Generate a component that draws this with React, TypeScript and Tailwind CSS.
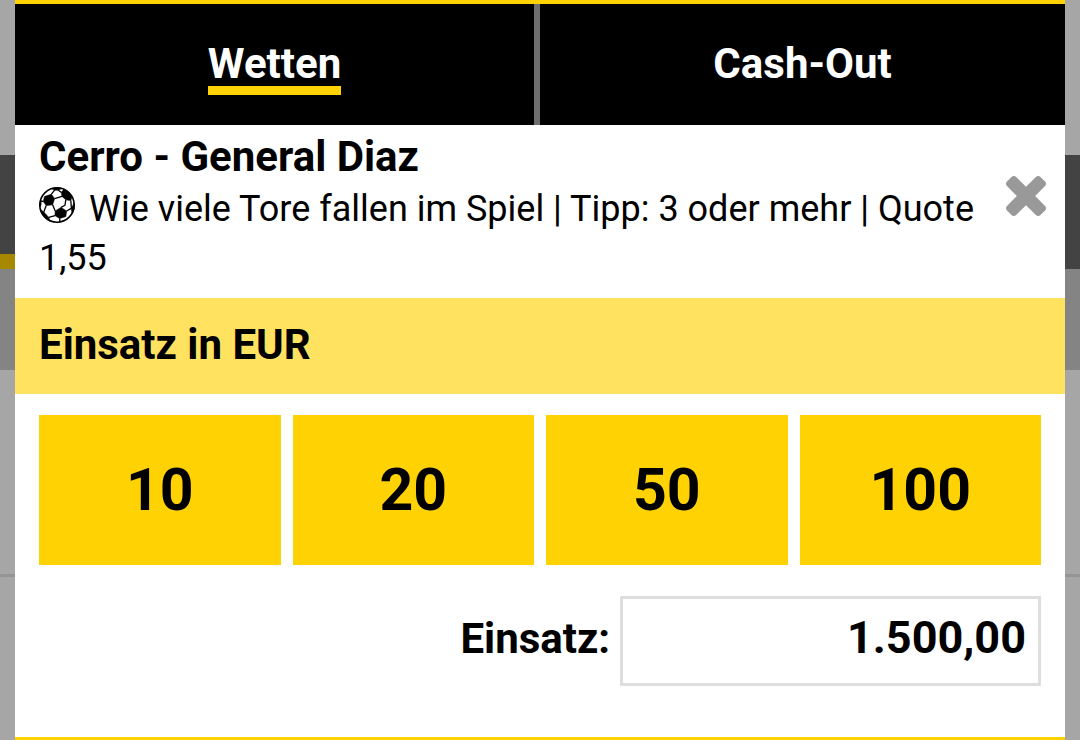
import { useState } from 'react';

const STAKES = [10, 20, 50, 100];

function SoccerBall({ className }: { className?: string }) {
  return (
    <svg viewBox="0 0 36 36" className={className} aria-hidden="true">
      <circle cx="18" cy="18" r="17.2" fill="#fff" stroke="#000" strokeWidth="1.6" />
      <g fill="#000" stroke="#000" strokeWidth="0.6" strokeLinejoin="round">
        <path d="M5.4 9.6 12.4 7.2 15.6 11.6 13.6 17.8 7.2 18.6 4.4 14.6z" />
        <path d="M22.4 5.4 24.6 2.4 29 4.4 33 9.4 31.8 13.6 26.8 12.8 23 9.4z" />
        <path d="M16.2 24 22 20.4 27.6 24 26.8 29.6 20.6 31.6 16 28.6z" />
        <path d="M1.4 22.6 4.8 25 9.8 30.4 11 34.2A18 18 0 0 1 1.4 22.6z" />
        <path d="M12.4 1.6q5.6-1.6 10.4 0l-3.6 1.6h-3.6z" />
        <path d="M35.2 16v6l-2 4.6-1-5.2z" />
        <path d="M.8 15.4 2.2 13.6 2 18.2.8 20z" />
      </g>
      <path
        d="M12.4 7.2 15.6 3.2M19.2 3.2l3.2 2.2M15.6 11.6l7.4-2.2M13.6 17.8l2.6 6.2M26.8 12.8l-.8 5.4-4 2.2M7.2 18.6 4.8 25M4.4 14.6 2.2 14M16 28.6l-6.2 1.8M27.6 24l4.6-2.6M20.6 31.6l.4 3M31.8 13.6l.6 7.8"
        fill="none"
        stroke="#000"
        strokeWidth="1.3"
      />
    </svg>
  );
}

function CloseIcon({ className }: { className?: string }) {
  return (
    <svg viewBox="110 366 1188 1188" className={className} fill="currentColor" aria-hidden="true">
      <path d="M1298 1322q0 40-28 68l-136 136q-28 28-68 28t-68-28l-294-294-294 294q-28 28-68 28t-68-28l-136-136q-28-28-28-68t28-68l294-294-294-294q-28-28-28-68t28-68l136-136q28-28 68-28t68 28l294 294 294-294q28-28 68-28t68 28l136 136q28 28 28 68t-28 68l-294 294 294 294q28 28 28 68z" />
    </svg>
  );
}

// Dimmed page behind the bet slip
function PageBehind() {
  return (
    <div className="absolute inset-0 flex flex-col bg-[#a6a6a6]" aria-hidden="true">
      <div className="h-[155px]" />
      <div className="flex h-[114px] items-end bg-[#434343]">
        <div className="h-[15px] w-1/2 bg-[#a68900]" />
      </div>
      <div className="h-[101px] bg-[#848484]" />
      <div className="h-[207px] border-b-3 border-[#959595]" />
    </div>
  );
}

export default function App() {
  const [tab, setTab] = useState('Wetten');
  const [stake, setStake] = useState('1.500,00');

  return (
    <div className="relative min-h-screen px-[15px] font-['Roboto',sans-serif] text-black">
      <PageBehind />

      <main className="relative flex min-h-screen flex-col border-t-4 border-b-3 border-[#ffd204] bg-white">
        {/* Tabs */}
        <nav className="flex h-[121px] bg-black text-[42px] font-bold text-white">
          {['Wetten', 'Cash-Out'].map((name) => (
            <button
              key={name}
              onClick={() => setTab(name)}
              className="flex w-1/2 items-center justify-center border-[#6e6e6e] pb-0.5 first:border-r-6"
            >
              <span
                className={
                  tab === name
                    ? 'border-y-9 border-t-transparent border-b-[#ffd204] leading-[44px]'
                    : 'leading-[44px]'
                }
              >
                {name}
              </span>
            </button>
          ))}
        </nav>

        {/* Selected bet */}
        <section className="flex items-start justify-between pt-1 pr-[19px] pb-[15px] pl-6">
          <div>
            <h2 className="pb-px text-[42px] leading-[55px] font-bold">Cerro - General Diaz</h2>
            <p className="text-[36px] leading-[49px]">
              <SoccerBall className="mr-[14px] inline-block size-9 align-[-2px]" />
              Wie viele Tore fallen im Spiel | Tipp: 3 oder mehr | Quote 1,55
            </p>
          </div>
          <button aria-label="Wette entfernen" className="mt-[47px] shrink-0 text-[#999]">
            <CloseIcon className="size-10" />
          </button>
        </section>

        <h3 className="bg-[#ffe260] px-6 pb-0.5 text-[42px] leading-[94px] font-bold">
          Einsatz in EUR
        </h3>

        {/* Quick stakes */}
        <div className="grid grid-cols-4 gap-3 px-6 pt-[21px]">
          {STAKES.map((value) => (
            <button
              key={value}
              onClick={() => setStake(`${value},00`)}
              className="h-[150px] bg-[#ffd204] text-[59px] font-bold"
            >
              {value}
            </button>
          ))}
        </div>

        <div className="flex items-center justify-end gap-2.5 px-6 pt-[31px] pb-12">
          <label htmlFor="stake" className="pb-1.5 text-[42px] font-bold">
            Einsatz:
          </label>
          <input
            id="stake"
            type="text"
            inputMode="decimal"
            value={stake}
            onChange={(e) => setStake(e.target.value)}
            className="h-[90px] w-[42%] border-3 border-[#dedede] bg-white px-3 pb-2 text-right text-[45px] font-bold outline-none"
          />
        </div>
      </main>
    </div>
  );
}
